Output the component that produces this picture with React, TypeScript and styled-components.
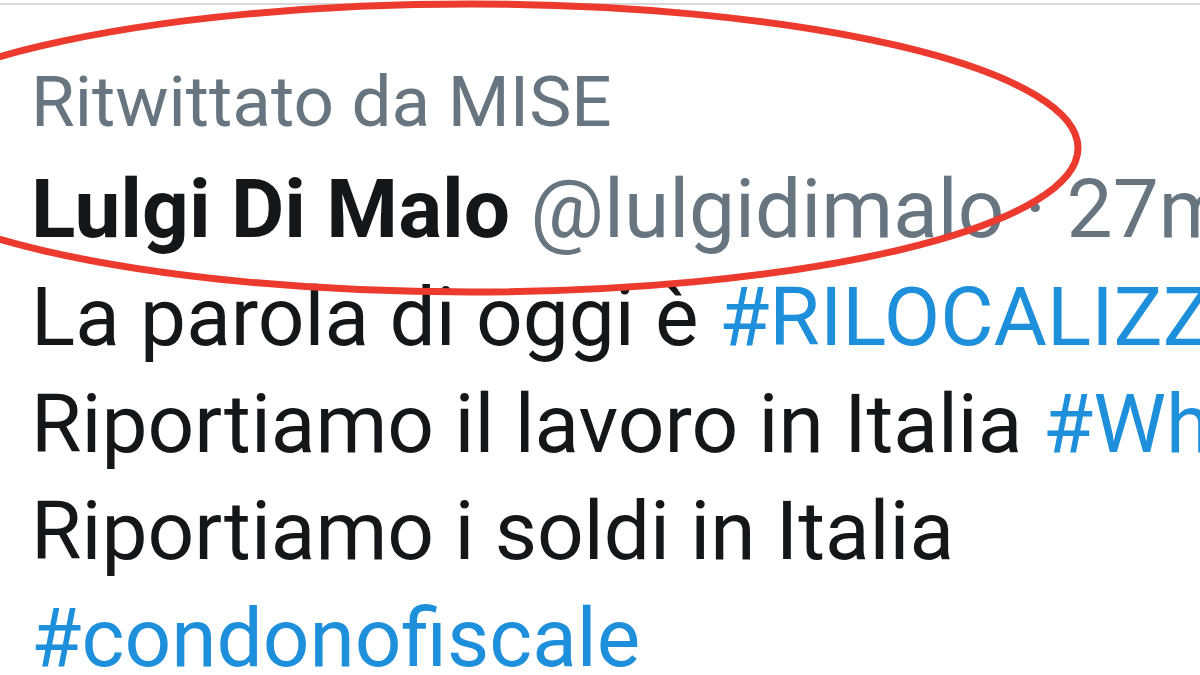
import React from "react";
import styled, { createGlobalStyle } from "styled-components";

const Global = createGlobalStyle`
  html, body { margin: 0; padding: 0; background: #ffffff; }
  body { font-family: Roboto, "Noto Sans", "Liberation Sans", sans-serif; }
`;

const Page = styled.div`
  position: relative;
  width: 1200px;
  height: 675px;
  overflow: hidden;
  background: #ffffff;
  display: flex;
  flex-direction: column;
`;

const TopRule = styled.div`
  margin-top: 3px;
  height: 2px;
  background: #d9d9d9;
  flex: none;
`;

const Tweet = styled.article`
  display: flex;
  flex-direction: column;
  padding: 43px 0 0 31px;
`;

const Header = styled.div`
  display: flex;
  flex-direction: column;
`;

const Line = styled.div`
  white-space: nowrap;
  overflow: hidden;
`;

const Retweeted = styled(Line)`
  color: #66757f;
  font-size: 71px;
  line-height: 108px;
`;

const NameRow = styled(Line)`
  font-size: 82px;
  line-height: 106px;
`;

const Name = styled.span`
  color: #14171a;
  font-weight: 700;
`;

const Meta = styled.span`
  color: #66757f;
`;

const Body = styled.div`
  display: flex;
  flex-direction: column;
  margin-top: 2px;
  font-size: 82px;
  line-height: 107px;
  color: #14171a;
`;

const Hashtag = styled.span`
  color: #1d8fdb;
`;

const Annotation = styled.svg`
  position: absolute;
  left: 0;
  top: 0;
  pointer-events: none;
`;

export default function App() {
  return (
    <>
      <Global />
      <Page>
        <TopRule />
        <Tweet>
          <Header>
            <Retweeted>Ritwittato da MISE</Retweeted>
            <NameRow>
              <Name>Lulgi Di Malo</Name> <Meta>@lulgidimalo · 27m</Meta>
            </NameRow>
          </Header>
          <Body>
            <Line>
              La parola di oggi è <Hashtag>#RILOCALIZZIAMO</Hashtag>
            </Line>
            <Line>
              Riportiamo il lavoro in Italia <Hashtag>#Whirlpool</Hashtag>
            </Line>
            <Line>Riportiamo i soldi in Italia</Line>
            <Line>
              <Hashtag>#condonofiscale</Hashtag>
            </Line>
          </Body>
        </Tweet>
        <Annotation width="1200" height="675" viewBox="0 0 1200 675">
          <ellipse
            cx="470"
            cy="148"
            rx="608"
            ry="144"
            fill="none"
            stroke="#ec3a2e"
            strokeWidth="7"
          />
        </Annotation>
      </Page>
    </>
  );
}
